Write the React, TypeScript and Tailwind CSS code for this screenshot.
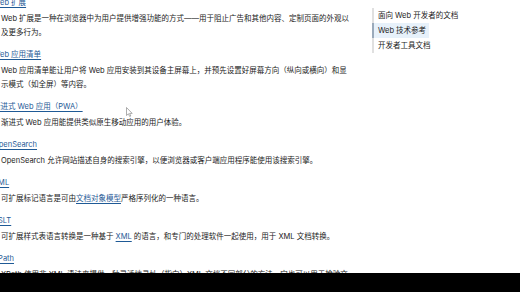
const links = "text-[#1f5a96] underline underline-offset-[1.5px] decoration-[0.5px]"

type Entry = {
  title: string
  desc: React.ReactNode
}

const entries: Entry[] = [
  {
    title: "Web 扩展",
    desc: "Web 扩展是一种在浏览器中为用户提供增强功能的方式——用于阻止广告和其他内容、定制页面的外观以及更多行为。",
  },
  {
    title: "Web 应用清单",
    desc: "Web 应用清单能让用户将 Web 应用安装到其设备主屏幕上，并预先设置好屏幕方向（纵向或横向）和显示模式（如全屏）等内容。",
  },
  {
    title: "渐进式 Web 应用（PWA）",
    desc: "渐进式 Web 应用能提供类似原生移动应用的用户体验。",
  },
  {
    title: "OpenSearch",
    desc: "OpenSearch 允许网站描述自身的搜索引擎，以便浏览器或客户端应用程序能使用该搜索引擎。",
  },
  {
    title: "XML",
    desc: (
      <>
        可扩展标记语言是可由<a className={links}>文档对象模型</a>严格序列化的一种语言。
      </>
    ),
  },
  {
    title: "XSLT",
    desc: (
      <>
        可扩展样式表语言转换是一种基于 <a className={links}>XML</a> 的语言，和专门的处理软件一起使用，用于 XML 文档转换。
      </>
    ),
  },
  {
    title: "XPath",
    desc: "XPath 使用非 XML 语法来提供一种灵活地寻址（指向）XML 文档不同部分的方法。它也可以用于检验文档中的节点。",
  },
]

function Cursor() {
  return (
    <svg className="absolute left-[126px] top-[107px]" width="7" height="10" viewBox="0 0 7 10">
      <path d="M0.5 0.5 L0.5 8.5 L2.4 6.8 L3.7 9.5 L4.8 9 L3.6 6.4 L6.2 6.4 Z" fill="#fff" stroke="#8a8a8a" strokeWidth="0.7" />
    </svg>
  )
}

export default function App() {
  return (
    <div
      className="relative flex h-[292px] w-[520px] flex-col overflow-hidden bg-white text-[7.5px] text-[#1b1b1b]"
      style={{ fontFamily: 'Inter, "Noto Sans CJK SC", sans-serif' }}
    >
      <div className="flex h-[273px] overflow-hidden">
        <dl className="-ml-[7px] mt-[-5px] w-[359px] shrink-0">
          {entries.map((e) => (
            <div key={e.title} className="mb-[7px]">
              <dt className="leading-[15px]">
                <a className={links}>{e.title}</a>
              </dt>
              <dd className="ml-[8px] mt-[2px] leading-[14px]">{e.desc}</dd>
            </div>
          ))}
        </dl>
        <nav className="ml-[20px] mt-[8px] flex h-fit flex-col border-l-2 border-[#e0e0e0] leading-[15px]">
          <a className="pl-[4px]">面向 Web 开发者的文档</a>
          <a className="-ml-[2px] w-fit border-l-2 border-[#9aaabb] bg-[#e7f1fa] pl-[4px] pr-[3px]">Web 技术参考</a>
          <a className="pl-[4px]">开发者工具文档</a>
        </nav>
      </div>
      <div className="h-[19px] bg-black" />
      <Cursor />
    </div>
  )
}
